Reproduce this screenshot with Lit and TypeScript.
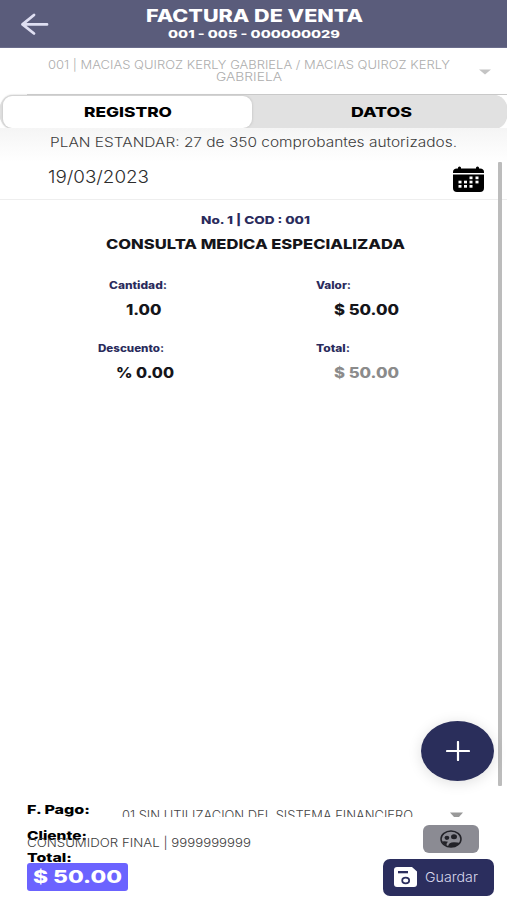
import { LitElement, html, css, svg } from "lit";
import { customElement, property } from "lit/decorators.js";

/** Text stretched to a given width; the box is as tall as its capitals. */
@customElement("wide-text")
class WideText extends LitElement {
  @property() text = "";
  @property({ type: Number }) w = 100;
  @property({ type: Number }) size = 14;
  @property({ type: Number }) weight = 800;

  static styles = css`
    :host { display: block; flex: none; }
    svg { display: block; overflow: visible; }
    text { font-family: Inter, "Liberation Sans", sans-serif; fill: currentColor; white-space: pre; }
  `;

  render() {
    const h = Math.round(this.size * 0.727 * 2) / 2;
    return html`<svg width=${this.w} height=${h}>${svg`
      <text x="0" y=${h} font-size=${this.size} font-weight=${this.weight}
        textLength=${this.w} lengthAdjust="spacingAndGlyphs">${this.text}</text>`}</svg>`;
  }
}

const t = (text: string, w: number, size: number, weight = 800) =>
  html`<wide-text .text=${text} .w=${w} .size=${size} .weight=${weight}></wide-text>`;

const calendarDots = [
  [16.5, 10.5], [22.5, 10.5],
  [5.5, 14.7], [11, 14.7], [16.5, 14.7], [22.5, 14.7],
  [5.5, 19], [11, 19], [16.5, 19],
];

@customElement("app-root")
class AppRoot extends LitElement {
  static styles = css`
    :host { display: flex; flex-direction: column; position: relative; width: 507px; height: 900px;
      background: #fff; overflow: hidden; color: #111; font-family: Inter, sans-serif; }
    * { box-sizing: border-box; }
    svg { display: block; flex: none; }
    .top { height: 48px; flex: none; background: #5a5c7b; color: #fff; display: grid;
      grid-template-columns: 60px 1fr 60px; border-bottom: 1px solid #6b6d8c; }
    .back { padding: 13px 0 0 20px; }
    .titles { display: flex; flex-direction: column; align-items: center; padding: 9px 0 0 1px; gap: 8.5px; }
    .select { height: 47px; flex: none; display: flex; justify-content: space-between; padding: 12px 16px 0 48px;
      color: #adadad; }
    .lines { display: flex; flex-direction: column; align-items: center; gap: 3.2px; }
    .select > svg { margin-top: 8.5px; }
    .rule { height: 1px; margin: -1px 0 0 27px; background: #c9c9c9; flex: none; }
    .tabs { height: 34px; flex: none; background: #e1e1e1; border-radius: 14px; display: grid;
      grid-template-columns: 249px 1fr; padding: 1px 0 1px 3px; color: #000; box-shadow: 0 0 1px #ccc; }
    .tab { display: flex; align-items: center; justify-content: center; border-radius: 9px; padding-bottom: 1px; }
    .on { background: #fff; box-shadow: 0 0 2px 1px #cfcfcf; }
    .second { padding-left: 3px; }
    .plan { height: 34px; flex: none; margin-top: -1px; padding: 9px 0 0 50px; color: #3c3c3c;
      background: linear-gradient(#f5f5f5, #fff); }
    .date { height: 38px; flex: none; display: flex; justify-content: space-between; padding: 7.5px 23px 0 48px;
      color: #2c2c2c; border-bottom: 1px solid #eee; }
    .date svg { margin-top: -4px; }
    .item { flex: none; display: flex; flex-direction: column; align-items: center; padding: 15.5px 0 0 3px;
      color: #15151a; }
    .code { color: #2a2b5c; margin-bottom: 15.5px; }
    .grid { width: 507px; display: grid; grid-template-columns: 98px 218px 1fr; row-gap: 26.5px;
      margin: 32px 0 0 -3px; }
    .cell { height: 36.5px; display: flex; flex-direction: column; gap: 15px; align-items: flex-start; }
    .left { grid-column: 2; }
    .label { color: #2a2b5c; }
    .ind11 { margin-left: 11px; }
    .ind28 { margin-left: 28px; }
    .ind18 { margin-left: 17.5px; }
    .muted { color: #8b8b8b; }
    .scroll { position: absolute; left: 498px; top: 162px; width: 4px; height: 624px; background: #bcbcbc; border-radius: 1px; }
    .fab { position: absolute; left: 421px; top: 721px; width: 73px; height: 60px; border-radius: 50%;
      background: #2a2e5b; display: grid; place-items: center; box-shadow: 0 2px 14px rgba(0,0,0,.13); }
    .foot { margin-top: auto; height: 100px; flex: none; padding: 4.5px 13px 0 27px; display: flex;
      justify-content: space-between; color: #000; }
    .info { display: flex; flex-direction: column; width: 230px; }
    .pay { display: flex; height: 26px; gap: 32px; }
    .method { height: 12.5px; flex: none; width: 292px; padding-top: 5.5px; overflow: hidden; color: #444; }
    .name { margin-top: -1.5px; color: #3c3c3c; }
    .sum { margin-top: 6px; }
    .total { margin-top: 1px; width: 101px; height: 28px; border-radius: 3px; background: #6b63ff; color: #fff;
      padding: 7.5px 6px 0; }
    .acts { display: flex; flex-direction: column; align-items: flex-end; width: 112px; }
    .arrow { height: 13px; width: 44px; padding-top: 7.5px; }
    .user { margin: 7.5px 15.5px 0 0; width: 56px; height: 28px; border-radius: 6px; background: #8b8b93;
      display: grid; place-items: center; flex: none; }
    .save { margin-top: 5.5px; width: 111px; height: 37px; border-radius: 7px; background: #2b2e5e; color: #d9d9ee;
      display: flex; align-items: center; gap: 8px; padding-left: 11px; flex: none; }
  `;

  render() {
    return html`
      <header class="top">
        <div class="back"><svg width="30" height="23" fill="none" stroke="#dfdff2" stroke-width="2.8" stroke-linecap="round" stroke-linejoin="round">
          <path d="M27 11.4H2.5M14 2L2.5 11.4L14 20.5"/></svg></div>
        <div class="titles">${t("FACTURA DE VENTA", 217, 17)}${t("001 - 005 - 000000029", 172, 11)}</div>
      </header>
      <div class="select">
        <div class="lines">${t("001 | MACIAS QUIROZ KERLY GABRIELA / MACIAS QUIROZ KERLY", 402, 11.5, 300)}${t("GABRIELA", 66, 11.5, 300)}</div>
        <svg width="12" height="6"><path d="M0 .5H12L6 5.5Z" fill="#c4c4c4"/></svg>
      </div>
      <div class="rule"></div>
      <div class="tabs">
        <div class="tab on">${t("REGISTRO", 88, 13.8)}</div>
        <div class="tab second">${t("DATOS", 61, 13.8)}</div>
      </div>
      <div class="plan">${t("PLAN ESTANDAR: 27 de 350 comprobantes autorizados.", 407, 13, 300)}</div>
      <div class="date">${t("19/03/2023", 101, 17.3, 300)}
        <svg width="31" height="26"><path d="M0 7V6Q0 2.5 4 2.5H5V1.5Q6.5-.5 8 1.5V2.5H23V1.5Q24.5-.5 26 1.5V2.5H27Q31 2.5 31 6V7ZM0 8.5H31V22Q31 26 27 26H4Q0 26 0 22Z" fill="#000"/>
          ${calendarDots.map(([x, y]) => svg`<rect x=${x} y=${y} width="3" height="2.7" fill="#fff"/>`)}</svg>
      </div>
      <section class="item">
        <div class="code">${t("No. 1 | COD : 001", 109, 11)}</div>
        ${t("CONSULTA MEDICA ESPECIALIZADA", 299, 13.6)}
        <div class="grid">
          <div class="cell left"><div class="label ind11">${t("Cantidad:", 58, 10.3)}</div><div class="ind28">${t("1.00", 35.5, 14.3)}</div></div>
          <div class="cell"><div class="label">${t("Valor:", 35, 10.3)}</div><div class="ind18">${t("$ 50.00", 65, 14.3)}</div></div>
          <div class="cell left"><div class="label">${t("Descuento:", 66, 10.3)}</div><div class="ind18">${t("% 0.00", 58, 14.3)}</div></div>
          <div class="cell"><div class="label">${t("Total:", 34, 10.3)}</div><div class="ind18 muted">${t("$ 50.00", 65, 14.3)}</div></div>
        </div>
      </section>
      <footer class="foot">
        <div class="info">
          <div class="pay">${t("F. Pago:", 63, 12.4)}
            <div class="method">${t("01 SIN UTILIZACION DEL SISTEMA FINANCIERO", 291, 12.8, 300)}</div></div>
          ${t("Cliente:", 60, 12.4)}
          <div class="name">${t("CONSUMIDOR FINAL | 9999999999", 224, 12, 300)}</div>
          <div class="sum">${t("Total:", 45, 12.4)}</div>
          <div class="total">${t("$ 50.00", 89, 17.5)}</div>
        </div>
        <div class="acts">
          <div class="arrow"><svg width="13" height="5"><path d="M0 .5H13L9 5H4Z" fill="#999"/></svg></div>
          <div class="user"><svg width="22" height="18" viewBox="0 0 22 18">
            <ellipse cx="11" cy="9" rx="10" ry="8" fill="none" stroke="#222228" stroke-width="1.5"/>
            <ellipse cx="6.9" cy="7.8" rx="2.4" ry="2.1" fill="#222228"/><ellipse cx="14" cy="6.8" rx="3" ry="2.5" fill="#222228"/>
            <path d="M1.8 11.6Q5 10.8 8 11.8Q6.4 13 6.4 15.5Q3 14 1.8 11.6ZM8 16.5Q8.5 12.2 14 12.2Q18 12.2 19.600 13Q16.500 17.300 11 17Z" fill="#222228"/></svg></div>
          <div class="save"><svg width="23" height="20" viewBox="0 0 23 20">
            <path d="M3 0H18L23 4.5V17Q23 20 20 20H3Q0 20 0 17V3Q0 0 3 0Z" fill="#fff"/>
            <rect x="4" y="4" width="10" height="2.3" fill="#2b2e5e"/>
            <ellipse cx="11.7" cy="13.5" rx="3.5" ry="2.9" fill="none" stroke="#2b2e5e" stroke-width="1.7"/></svg>
            ${t("Guardar", 53, 13.3, 300)}</div>
        </div>
      </footer>
      <div class="scroll"></div>
      <div class="fab"><svg width="24" height="20"><path d="M1 10H23M12 1V19" stroke="#fff" stroke-width="2.2" stroke-linecap="round"/></svg></div>
    `;
  }
}
